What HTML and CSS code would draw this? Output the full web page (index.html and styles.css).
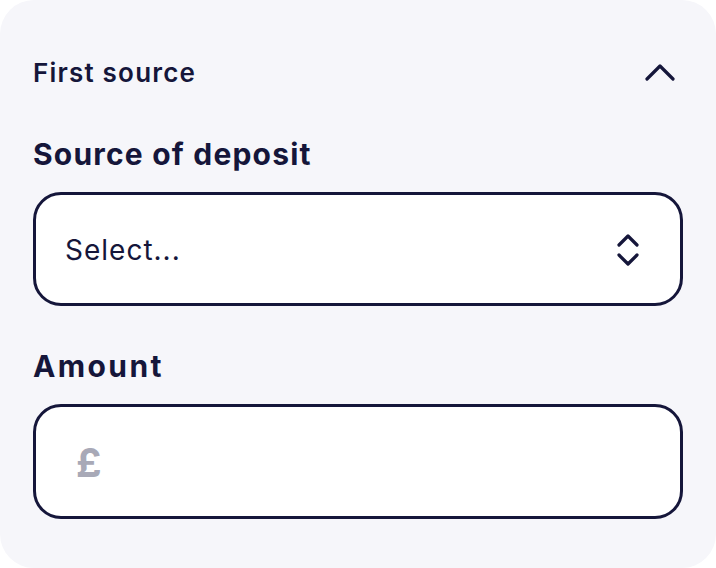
FILE: index.html
```html
<!DOCTYPE html>
<html>
<head>
<meta charset="utf-8">
<link rel="stylesheet" href="styles.css">
</head>
<body>
<div class="card">
  <div class="header">
    <span class="title">First source</span>
    <svg class="chev" width="30" height="18" viewBox="0 0 30 18"><path d="M2 16 L15 3 L28 16" fill="none" stroke="#15163a" stroke-width="3.2" stroke-linecap="round" stroke-linejoin="round"/></svg>
  </div>
  <div class="field">
    <div class="label">Source of deposit</div>
    <div class="box select">
      <span class="placeholder">Select...</span>
      <svg width="24" height="34" viewBox="0 0 24 34"><path d="M3 12 L12 3 L21 12 M3 22 L12 31 L21 22" fill="none" stroke="#15163a" stroke-width="3.2" stroke-linecap="round" stroke-linejoin="round"/></svg>
    </div>
  </div>
  <div class="field amount">
    <div class="label wide">Amount</div>
    <div class="box">
      <span class="pound">£</span>
    </div>
  </div>
</div>
</body>
</html>
```
FILE: styles.css
```css
html, body { margin: 0; padding: 0; background: #ffffff; }
body { width: 716px; height: 568px; font-family: Inter, "Noto Sans", sans-serif; color: #15163a; }
.card {
  box-sizing: border-box;
  width: 716px;
  height: 568px;
  background: #f6f6fa;
  border-radius: 34px;
  padding: 56px 33px 0 33px;
}
.header {
  display: flex;
  justify-content: space-between;
  align-items: center;
  height: 32px;
  padding-right: 8px;
}
.title { font-size: 26px; font-weight: 600; letter-spacing: 1.2px; }
.field { margin-top: 46px; }
.field.amount { margin-top: 40px; }
.label { font-size: 30px; font-weight: 700; line-height: 40px; letter-spacing: 1.2px; }
.label.wide { letter-spacing: 2.4px; }
.box {
  box-sizing: border-box;
  margin-top: 18px;
  width: 650px;
  height: 115px;
  background: #ffffff;
  border: 3.5px solid #15163a;
  border-radius: 28px;
  display: flex;
  align-items: center;
  padding: 2px 40px 0 29px;
}
.select { justify-content: space-between; height: 114px; }
.placeholder { font-size: 28px; font-weight: 400; letter-spacing: 1px; }
.pound { font-size: 40px; font-weight: 700; color: #a8a9b7; margin-left: 11px; }
```
